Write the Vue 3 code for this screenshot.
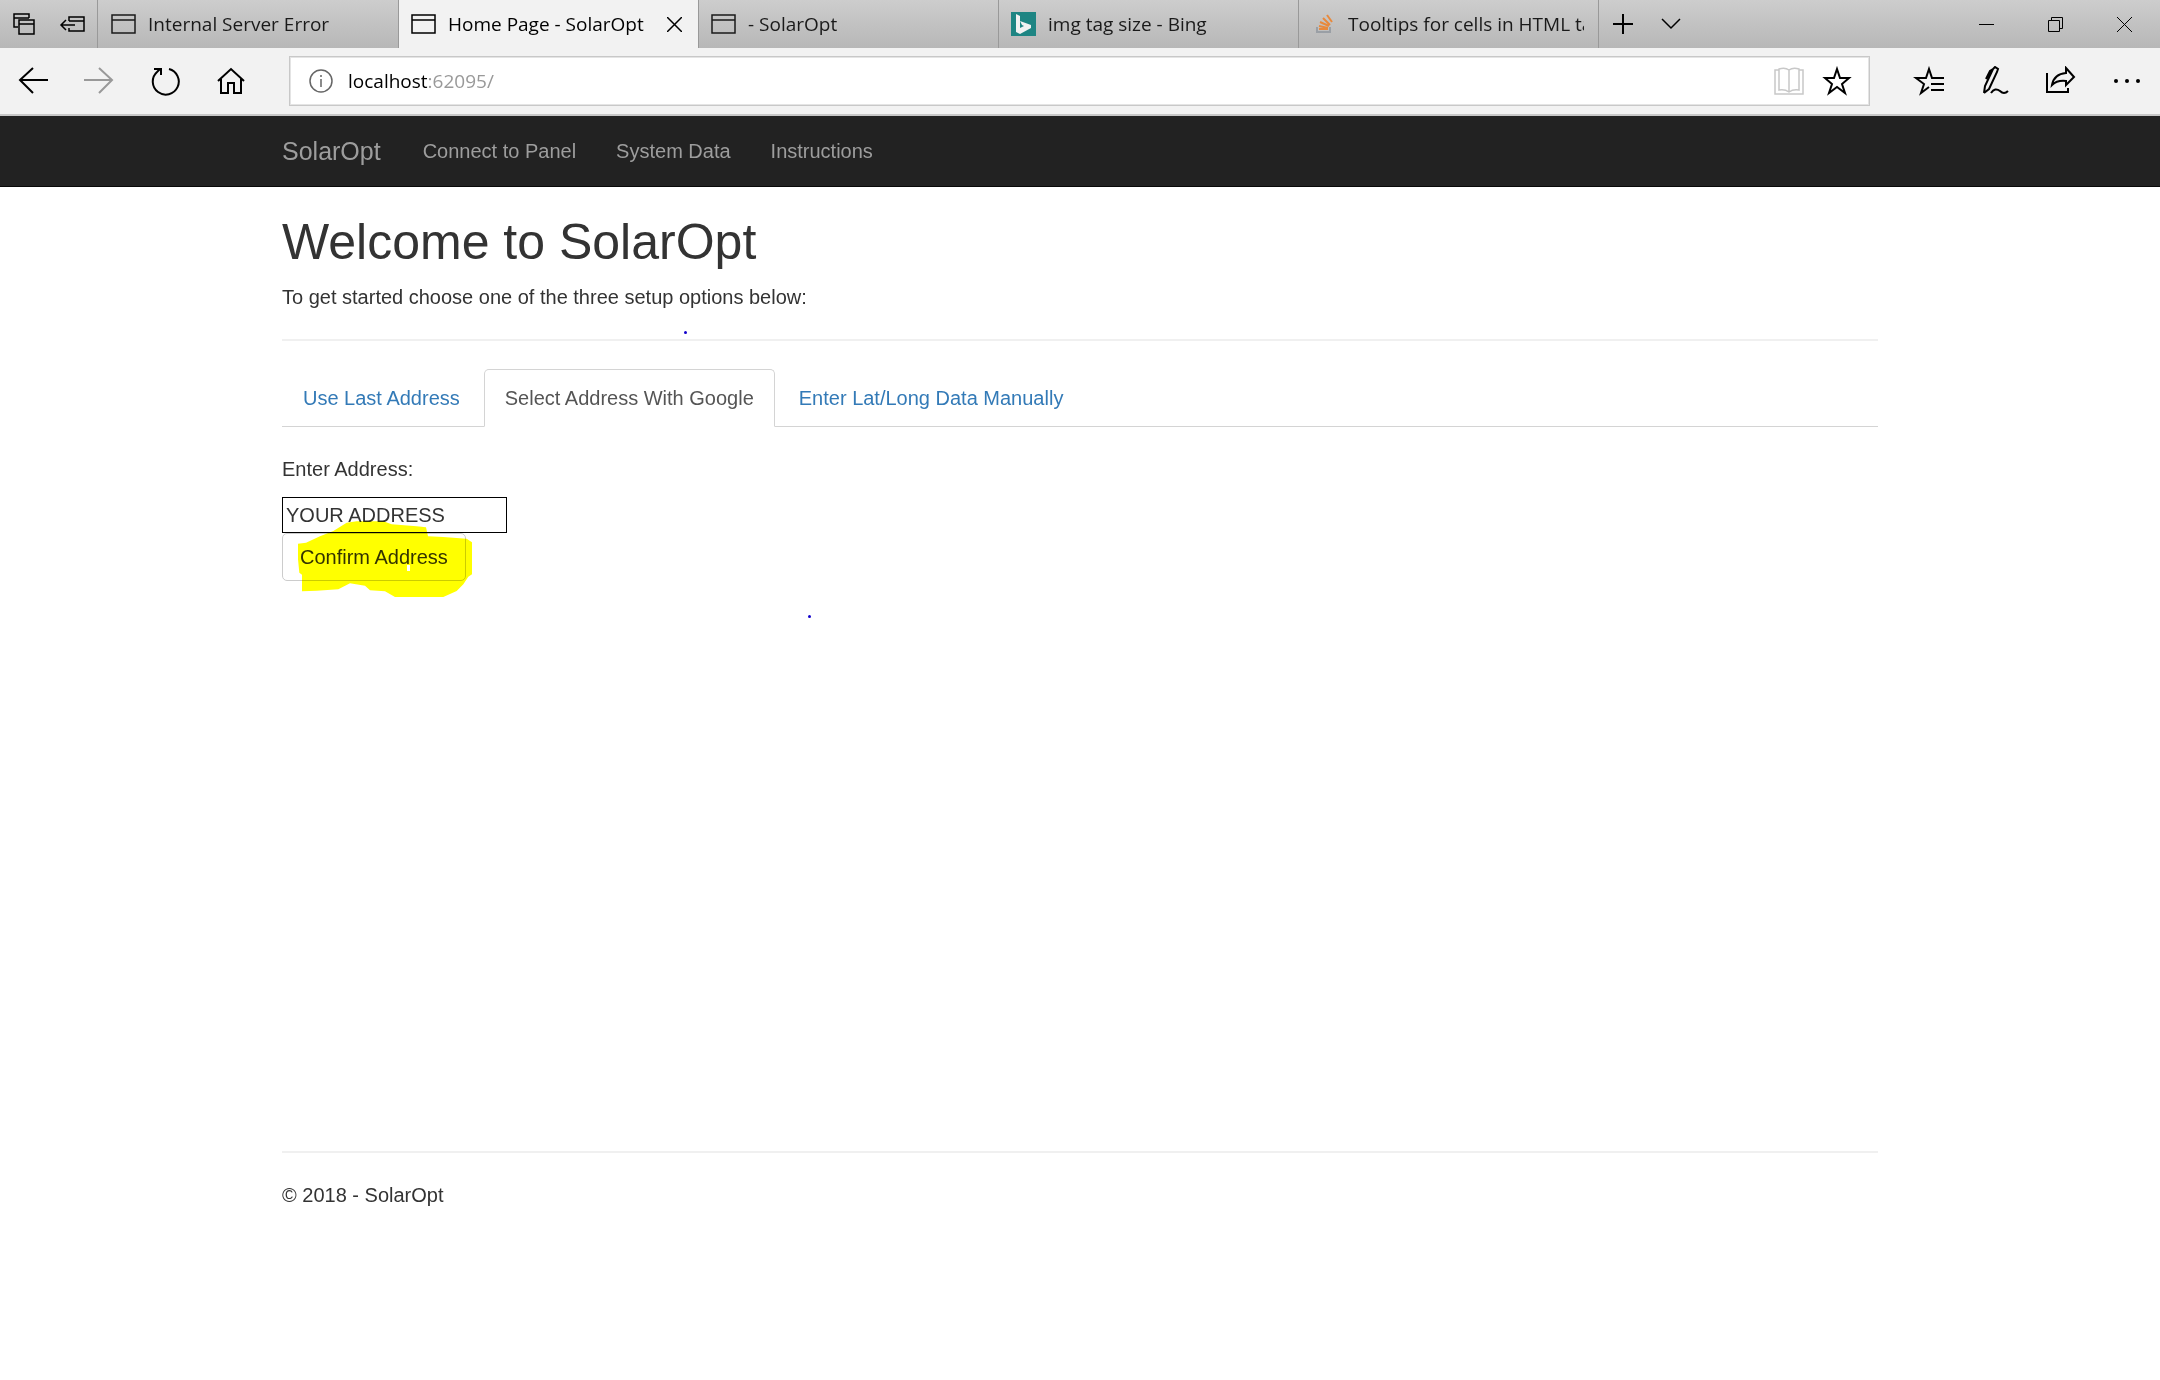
<script setup>
import { ref } from 'vue'

const tabs = [
  { title: 'Internal Server Error', icon: 'page' },
  { title: 'Home Page - SolarOpt', icon: 'page', active: true },
  { title: '- SolarOpt', icon: 'page' },
  { title: 'img tag size - Bing', icon: 'bing' },
  { title: 'Tooltips for cells in HTML table', icon: 'stack' },
]
const links = ['Connect to Panel', 'System Data', 'Instructions']
const options = ['Use Last Address', 'Select Address With Google', 'Enter Lat/Long Data Manually']
const selected = ref(1)
const address = ref('YOUR ADDRESS')
</script>

<template>
  <div class="window">
    <header class="chrome">
      <div class="strip">
        <div class="tab-tools">
          <button class="tool" aria-label="Tabs you've set aside">
            <svg width="24" height="24" viewBox="0 0 24 24" class="line">
              <path d="M6 15H2V2H17V6M2 6H17" /><path d="M7 8H22V22H7ZM7 12H22" />
            </svg>
          </button>
          <button class="tool" aria-label="Set these tabs aside">
            <svg width="26" height="24" viewBox="0 0 26 24" class="line">
              <path d="M10 9V5H25V19H10V16M10 9H25" /><path d="M16 13H3M7 8L2 13L7 18" />
            </svg>
          </button>
        </div>
        <nav class="tabs" aria-label="Open tabs">
          <div v-for="tab in tabs" :key="tab.title" class="tab" :class="{ active: tab.active }">
            <span class="favicon">
              <svg v-if="tab.icon === 'page'" width="25" height="20" viewBox="0 0 25 20" class="line">
                <path d="M1 1H24V19H1ZM1 6H24" />
              </svg>
              <svg v-else-if="tab.icon === 'bing'" width="25" height="24" viewBox="0 0 25 24">
                <path fill="#1e8583" d="M0 0H25V24H0Z" />
                <path fill="#f2f2f2" d="M5 2L9 4V16L13 14L11 13L9 9L20 13V16L9 22L5 20Z" />
              </svg>
              <svg v-else width="18" height="20" viewBox="0 0 18 20" fill="none" stroke-width="2">
                <path stroke="#9a9fa5" d="M2 13V18H15V13" />
                <path stroke="#e8893c" d="M4 15H13M4 12L13 14M5 8L14 12M8 4L15 11M12 1L17 8" />
              </svg>
            </span>
            <a href="#" class="tab-title">{{ tab.title }}</a>
            <button v-if="tab.active" class="tab-close" aria-label="Close tab">
              <svg width="15" height="15" viewBox="0 0 15 15" class="line"><path d="M0 0L15 15M15 0L0 15" /></svg>
            </button>
          </div>
        </nav>
        <div class="tab-actions">
          <button class="tool" aria-label="New tab">
            <svg width="20" height="20" viewBox="0 0 20 20" class="line bold"><path d="M10 0V20M0 10H20" /></svg>
          </button>
          <button class="tool" aria-label="Show tab previews">
            <svg width="20" height="12" viewBox="0 0 20 12" class="line"><path d="M1 1L10 10L19 1" /></svg>
          </button>
        </div>
        <div class="window-controls">
          <button aria-label="Minimize">
            <svg width="15" height="15" viewBox="0 0 15 15" class="hair"><path d="M0 7.5H15" /></svg>
          </button>
          <button aria-label="Restore">
            <svg width="15" height="15" viewBox="0 0 15 15" class="hair"><path d="M.5 3.5H11.5V14.5H.5ZM3.5 3.5V.5H14.5V11.5H11.5" /></svg>
          </button>
          <button aria-label="Close">
            <svg width="15" height="15" viewBox="0 0 15 15" class="hair"><path d="M0 0L15 15M15 0L0 15" /></svg>
          </button>
        </div>
      </div>

      <div class="toolbar">
        <div class="buttons">
          <button aria-label="Back">
            <svg width="30" height="30" viewBox="0 0 30 30" class="line bold"><path d="M30 14H2M15 2L2 14L15 27" /></svg>
          </button>
          <button aria-label="Forward" class="muted">
            <svg width="30" height="30" viewBox="0 0 30 30" class="line bold"><path d="M0 14H28M15 2L28 14L15 27" /></svg>
          </button>
          <button aria-label="Refresh">
            <svg width="30" height="30" viewBox="0 0 30 30" class="line bold"><path d="M19 3A13 13 0 1 1 7 6L10 3M4 3H11V9" /></svg>
          </button>
          <button aria-label="Home">
            <svg width="30" height="30" viewBox="0 0 30 30" class="line bold"><path d="M2 15L15 3L28 15M5 13V27H12V17H18V27H25V13" /></svg>
          </button>
        </div>
        <div class="address">
          <svg width="24" height="24" viewBox="0 0 24 24" class="info">
            <circle cx="12" cy="12" r="11" /><path d="M12 10V18M12 6V8" />
          </svg>
          <span class="url">localhost<span>:62095/</span></span>
          <button aria-label="Reading view" class="reader">
            <svg width="30" height="30" viewBox="0 0 30 30" class="line">
              <path d="M5 4H1V28H29V4H25" /><path d="M15 4Q11 1 5 3V24Q11 23 15 26Q19 23 25 24V3Q19 1 15 4V26" />
            </svg>
          </button>
          <button aria-label="Add to favorites">
            <svg width="30" height="30" viewBox="0 0 30 30" class="line bold"><path d="M15 3L18 12H27L20 18L23 27L15 21L7 27L10 18L3 12H12Z" /></svg>
          </button>
        </div>
        <div class="buttons">
          <button aria-label="Hub">
            <svg width="32" height="30" viewBox="0 0 32 30" class="line bold"><path d="M31 12H19L16 3L13 12H3L11 18L8 27L16 21M18 18H31M18 24H31" /></svg>
          </button>
          <button aria-label="Add notes">
            <svg width="30" height="30" viewBox="0 0 30 30" class="line bold">
              <path d="M4 27L5 20L13 3L15 1L18 3L17 6L9 23L4 27M6 13L10 5L13 3" /><path d="M11 27Q15 21 20 25Q24 29 28 25" />
            </svg>
          </button>
          <button aria-label="Share">
            <svg width="30" height="30" viewBox="0 0 30 30" class="line bold">
              <path d="M1 7V26H22V22" /><path d="M20 2L28 11L20 19V15Q11 14 6 19Q8 8 20 7Z" />
            </svg>
          </button>
          <button aria-label="Settings and more">
            <svg width="30" height="30" viewBox="0 0 30 30"><circle cx="4" cy="15" r="2" /><circle cx="15" cy="15" r="2" /><circle cx="26" cy="15" r="2" /></svg>
          </button>
        </div>
      </div>
    </header>

    <nav class="navbar">
      <div class="container nav-row">
        <a href="#" class="brand">SolarOpt</a>
        <a v-for="link in links" :key="link" href="#">{{ link }}</a>
      </div>
    </nav>

    <main class="container">
      <h1>Welcome to SolarOpt</h1>
      <p class="intro">To get started choose one of the three setup options below:<i class="dot dot-top"></i></p>
      <hr>
      <div class="options" role="tablist">
        <a
          v-for="(option, i) in options" :key="option" href="#" role="tab"
          :aria-selected="i === selected" :class="{ current: i === selected }"
          @click.prevent="selected = i"
        >{{ option }}</a>
      </div>
      <section class="panel">
        <label for="address">Enter Address:</label>
        <input id="address" v-model="address" type="text">
        <div class="confirm">
          <button type="button">Confirm Address</button>
          <svg class="marker" width="174" height="76" viewBox="84 245 522 228">
            <path fill="#ff0" fill-rule="evenodd" d="M84 313L108 310L150 291L190 275L230 250L260 246H340L365 255L440 261L468 264L474 291L520 293L590 298L606 309V405L595 412L580 435L560 455L520 473H375L345 456L300 453L285 439L240 432L205 450L140 454L96 456V406L88 400L84 360ZM411 377V395H420V377Z" />
          </svg>
          <i class="dot dot-bottom"></i>
        </div>
      </section>
      <hr>
      <footer>© 2018 - SolarOpt</footer>
    </main>
  </div>
</template>

<style>
body { margin: 0; background: #fff; }
</style>

<style scoped>
* { box-sizing: border-box; }
.window { color: #333; font: 20px/28px "Liberation Sans", Arial, sans-serif; }
a { color: inherit; text-decoration: none; }
button { padding: 0; border: 0; background: none; color: inherit; font: inherit; }
svg { display: block; flex: none; }
.line { fill: none; stroke: currentColor; stroke-width: 1.5; }
.line.bold { stroke-width: 2; }
.hair { fill: none; stroke: #000; stroke-width: 1; }

.chrome { color: #000; font: 19px/24px "Open Sans", "Noto Sans", sans-serif; border-bottom: 2px solid #c8c8c8; }
.strip { display: flex; height: 48px; background: linear-gradient(#cdcdcd, #b7b7b7); }
.strip button, .toolbar button { display: flex; align-items: center; justify-content: center; }
.tab-tools { display: flex; width: 98px; padding-right: 1px; border-right: 1px solid #999; margin-right: 1px; }
.tab-tools .tool { width: 48px; }
.tabs { display: flex; }
.tab { display: flex; align-items: center; width: 300px; padding: 0 14px 0 12px; border-right: 1px solid #999; color: #1a1a1a; }
.tab.active { background: #f2f2f2; color: #000; }
.favicon { display: flex; flex: none; justify-content: center; width: 25px; margin-right: 12px; }
.tab-title { flex: 1; overflow: hidden; white-space: nowrap; }
.tab-close { width: 20px; height: 24px; }
.tab-actions { display: flex; }
.tab-actions .tool { width: 48px; }
.window-controls { display: flex; margin-left: auto; margin-right: 1px; }
.window-controls button { width: 69px; }

.toolbar { display: flex; align-items: center; height: 66px; background: #f2f2f2; }
.buttons { display: flex; }
.buttons button { width: 66px; height: 48px; }
.buttons .muted { color: #999; }
.address { display: flex; flex: 1; align-items: center; height: 50px; margin: 0 26px 0 25px; padding: 0 8px 0 19px; border: 1px solid #c8c8c8; background: #fff; box-shadow: inset 0 0 0 1px #e4e4e4; }
.address button { width: 48px; height: 48px; }
.address .reader { color: #c8c8c8; }
.info { fill: none; stroke: #666; stroke-width: 1.5; }
.url { flex: 1; margin-left: 15px; }
.url span { color: #999; }

.container { width: 74%; min-width: 1000px; max-width: 1596px; margin: 0 auto; }
.navbar { background: #222; border-bottom: 1px solid #080808; color: #9d9d9d; }
.nav-row { display: flex; gap: 40px; padding: 21px 0; }
.brand { padding-right: 2px; font-size: 25px; }

h1 { margin: 28px 0 13px; color: #333; font-size: 50px; font-weight: 400; line-height: 55px; }
p { margin: 0; }
hr { height: 2px; margin: 28px 0; border: 0; background: #f0f0f0; }
.options { display: flex; gap: 3px; border-bottom: 1px solid #d4d4d4; color: #337ab7; }
.options a { margin-bottom: -1px; padding: 14px 20px; border: 1px solid transparent; border-radius: 5px 5px 0 0; }
.options .current { border-color: #d4d4d4 #d4d4d4 #fff; background: #fff; color: #555; }
.panel { min-height: 724px; padding-top: 28px; }
.panel + hr { margin-top: 0; }
.panel label { display: block; margin-bottom: 14px; }
.panel input { display: block; width: 225px; height: 36px; padding: 0 3px; border: 1px solid #000; border-radius: 0; background: #fff; color: #333; font: inherit; }
.intro, .confirm { position: relative; }
.confirm button { display: block; padding: 9px 17px; border: 1px solid #ccc; border-radius: 5px; }
.marker { position: absolute; top: -12px; left: 16px; mix-blend-mode: multiply; pointer-events: none; }
.dot { position: absolute; width: 3px; height: 3px; border-radius: 50%; background: #10c; }
.dot-top { top: 48px; left: 402px; }
.dot-bottom { top: 82px; left: 526px; }
</style>
